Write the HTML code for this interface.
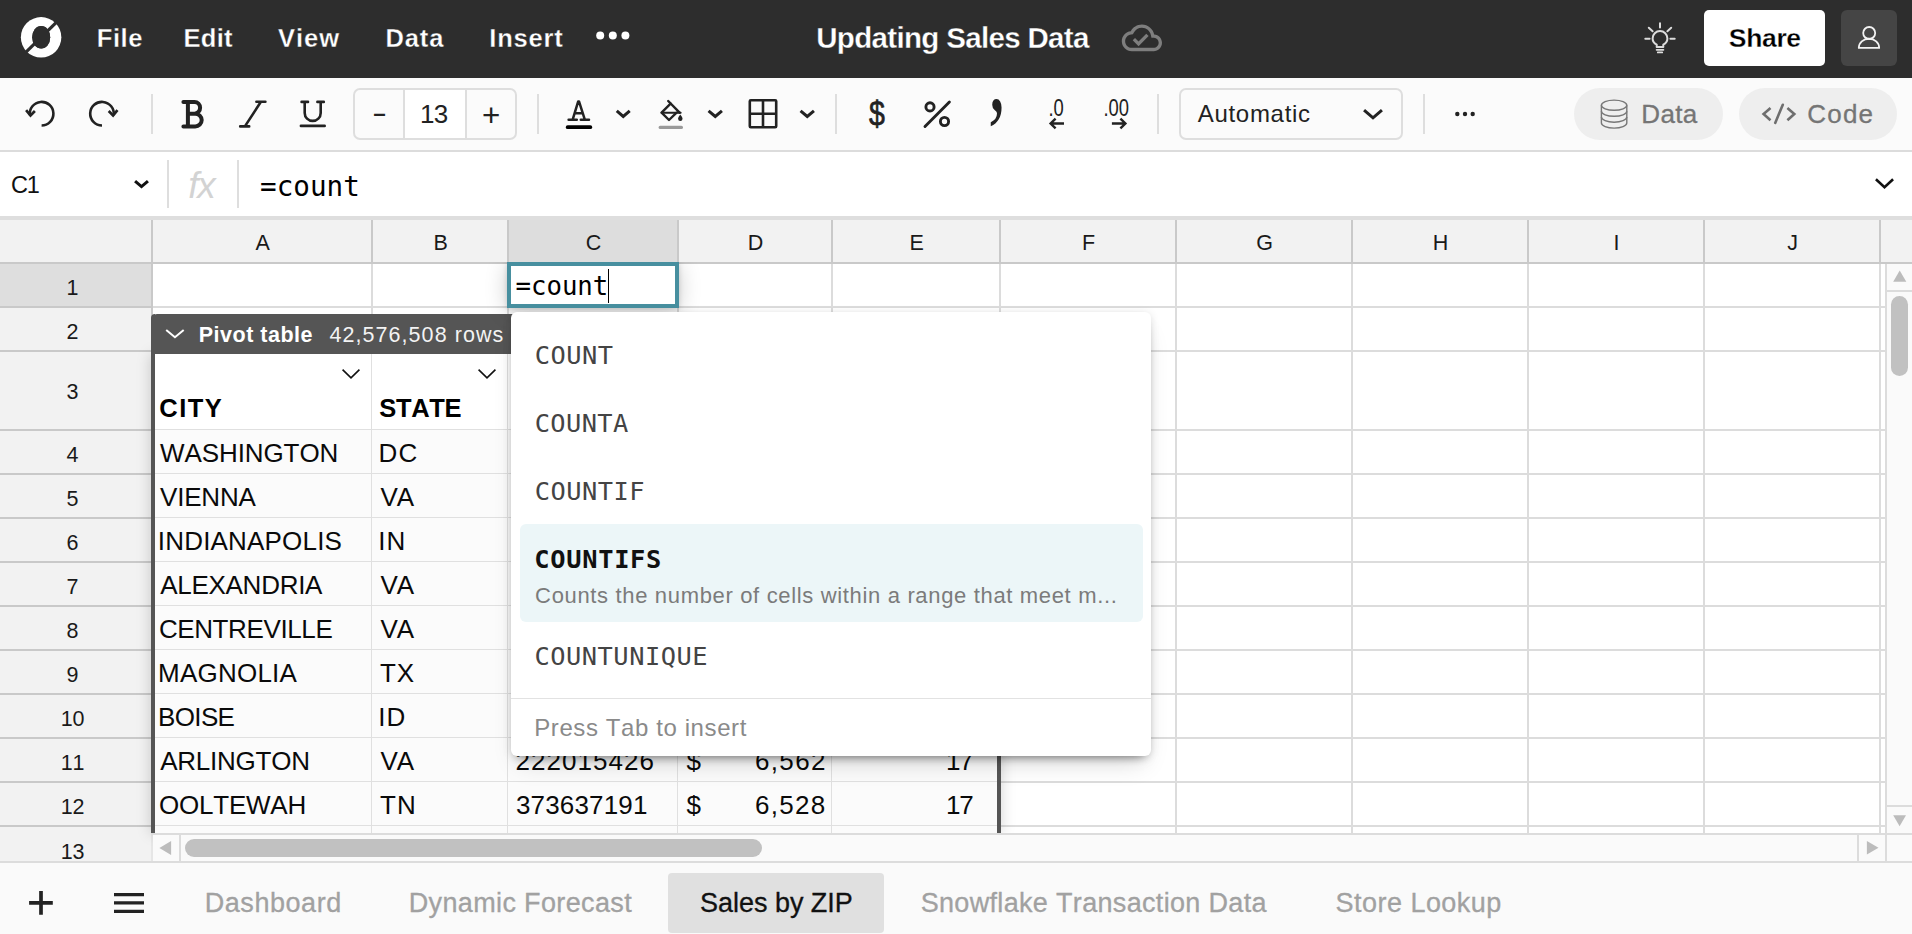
<!DOCTYPE html>
<html lang="en"><head><meta charset="utf-8"><title>Updating Sales Data</title>
<style>
html,body{margin:0;padding:0;}
body{width:1912px;height:934px;overflow:hidden;position:relative;background:#fff;font-family:"Liberation Sans",sans-serif;font-kerning:none;-webkit-font-smoothing:antialiased;}
.t{position:absolute;white-space:nowrap;line-height:1;display:block;}
.sec{position:absolute;left:0;width:1912px;overflow:hidden;}
svg{position:absolute;left:0;top:0;overflow:visible;}
.ln{position:absolute;background:#dcdcdc;}
</style></head><body>

<header class="sec" style="top:0;height:78px;background:#2d2d2d;">
<nav>
<span class="t" style="left:96.79px;top:25.85px;font-size:25.5px;color:#fff;font-weight:700;letter-spacing:0.550px;-webkit-text-stroke:0.3px #2d2d2d;">File</span>
<span class="t" style="left:183.49px;top:25.85px;font-size:25.5px;color:#fff;font-weight:700;letter-spacing:0.319px;-webkit-text-stroke:0.3px #2d2d2d;">Edit</span>
<span class="t" style="left:278.03px;top:25.85px;font-size:25.5px;color:#fff;font-weight:700;letter-spacing:1.005px;-webkit-text-stroke:0.3px #2d2d2d;">View</span>
<span class="t" style="left:385.59px;top:25.85px;font-size:25.5px;color:#fff;font-weight:700;letter-spacing:0.824px;-webkit-text-stroke:0.3px #2d2d2d;">Data</span>
<span class="t" style="left:489.29px;top:25.85px;font-size:25.5px;color:#fff;font-weight:700;letter-spacing:0.815px;-webkit-text-stroke:0.3px #2d2d2d;">Insert</span>
</nav>
<h1 class="t" style="left:816.23px;top:22.95px;font-size:29.5px;color:#fff;font-weight:700;letter-spacing:-0.675px;margin:0;-webkit-text-stroke:0.3px #2d2d2d;">Updating Sales Data</h1>
<button style="position:absolute;left:1704.00px;top:10.00px;width:121.00px;height:56.00px;background:#fff;border-radius:5px;border:0;padding:0;font-family:inherit;"><span class="t" style="left:24.84px;top:15.05px;font-size:26.5px;color:#000;font-weight:700;letter-spacing:-0.346px;-webkit-text-stroke:0.3px #fff;">Share</span></button>
<div style="position:absolute;left:1841.00px;top:10.00px;width:56.00px;height:56.00px;background:#454545;border-radius:6px;"></div>
<svg width="1912" height="78" viewBox="0 0 1912 78">
<circle cx="41.1" cy="37.35" r="20.25" fill="#fff"/><ellipse cx="41.2" cy="37.2" rx="9" ry="11.3" fill="#2d2d2d"/>
<path d="M25.2 52.9 L57.1 21.7" stroke="#2d2d2d" stroke-width="3.2" fill="none"/>
<ellipse cx="41.2" cy="37.2" rx="9" ry="11.3" fill="#2d2d2d"/>
<circle cx="600.2" cy="35.5" r="4" fill="#fff"/>
<circle cx="612.8" cy="35.5" r="4" fill="#fff"/>
<circle cx="625.4" cy="35.5" r="4" fill="#fff"/>
<g transform="translate(1121.8,17.7) scale(1.675)" fill="#7e7e7e"><path d="M19.35 10.04C18.67 6.59 15.64 4 12 4 9.11 4 6.6 5.64 5.35 8.04 2.34 8.36 0 10.91 0 14c0 3.31 2.69 6 6 6h13c2.76 0 5-2.24 5-5 0-2.64-2.05-4.78-4.65-4.96zM19 18H6c-2.21 0-4-1.79-4-4 0-2.05 1.53-3.76 3.56-3.97l1.07-.11.5-.95C8.08 7.14 9.94 6 12 6c2.62 0 4.88 1.86 5.39 4.43l.3 1.5 1.53.11c1.56.1 2.78 1.41 2.78 2.96 0 1.65-1.35 3-3 3zm-9-3.82l-2.09-2.09L6.5 13.5 10 17l6.01-6.01-1.41-1.41z"/></g>
<g stroke="#dcdcdc" stroke-width="2" fill="none" stroke-linecap="round">
<path d="M1660 23.3V27.5M1645.3 38.7H1649.6M1670.4 38.7H1674.7M1648.8 27.7L1652.6 31.2M1671.2 27.7L1667.4 31.2"/>
<path d="M1656.7 47 V44.6 C1654 43.2 1652.6 41 1652.6 38.5 A7.4 7.4 0 0 1 1667.4 38.5 C1667.4 41 1666 43.2 1663.3 44.6 V47 Z" stroke-linejoin="round"/>
<path d="M1656.6 49.8H1663.4M1657.8 52.4H1662.2" stroke-width="1.8"/>
</g>
<g stroke="#f2f2f2" stroke-width="1.8" fill="none"><circle cx="1869.2" cy="33" r="6"/><path d="M1858.8 47.9 A10.2 9.2 0 0 1 1879.2 47.9 Z" stroke-linejoin="round"/></g>
</svg>
</header>
<div class="sec" style="top:78px;height:72px;background:#fbfbfb;border-bottom:2px solid #dcdcdc;">
<div style="position:absolute;left:353.00px;top:10.00px;width:164.00px;height:51.50px;border:2px solid #dedede;border-radius:7px;box-sizing:border-box;"></div>
<div style="position:absolute;left:403.00px;top:12.00px;width:2.00px;height:47.50px;background:#dedede;"></div>
<div style="position:absolute;left:465.00px;top:12.00px;width:2.00px;height:47.50px;background:#dedede;"></div>
<div style="position:absolute;left:405.00px;top:12.00px;width:60.00px;height:47.50px;background:#fff;"></div>
<span class="t" style="left:371.70px;top:21.14px;font-size:28.00px;color:#222;transform:scaleX(1.6091);transform-origin:0 23.50px;">-</span>
<span class="t" style="left:419.92px;top:22.70px;font-size:26px;color:#222;letter-spacing:-0.597px;">13</span>
<span class="t" style="left:482.07px;top:21.28px;font-size:32.09px;color:#222;transform:scaleX(0.9750);transform-origin:0 27.04px;">+</span>
<div style="position:absolute;left:150.80px;top:16.00px;width:2.00px;height:40.00px;background:#dedede;"></div>
<div style="position:absolute;left:537.00px;top:16.00px;width:2.00px;height:40.00px;background:#dedede;"></div>
<div style="position:absolute;left:835.00px;top:16.00px;width:2.00px;height:40.00px;background:#dedede;"></div>
<div style="position:absolute;left:1157.00px;top:16.00px;width:2.00px;height:40.00px;background:#dedede;"></div>
<div style="position:absolute;left:1423.00px;top:16.00px;width:2.00px;height:40.00px;background:#dedede;"></div>
<span class="t" style="left:868.59px;top:18.19px;font-size:35.33px;color:#222;transform:scaleX(0.8075);transform-origin:0 30.16px;-webkit-text-stroke:0.7px #222;">$</span>
<span class="t" style="left:987.84px;top:-56.95px;font-size:106.68px;color:#222;transform:scaleX(0.6798);transform-origin:0 89.34px;font-family:'Liberation Serif', serif;">,</span>
<span class="t" style="left:1048.10px;top:18.70px;font-size:23px;color:#222;transform:scaleX(0.8);transform-origin:2.10px 50%;">.0</span>
<span class="t" style="left:1103.10px;top:18.70px;font-size:23px;color:#222;transform:scaleX(0.8);transform-origin:2.10px 50%;">.00</span>
<div style="position:absolute;left:1178.80px;top:10.00px;width:223.90px;height:51.50px;border:2px solid #dedede;border-radius:7px;box-sizing:border-box;"></div>
<span class="t" style="left:1197.75px;top:23.50px;font-size:24px;color:#222;letter-spacing:0.696px;">Automatic</span>
<div style="position:absolute;left:1573.80px;top:10.00px;width:149.20px;height:51.70px;background:#eeeeee;border-radius:26px;"></div>
<div style="position:absolute;left:1739.00px;top:10.00px;width:158.30px;height:51.70px;background:#eeeeee;border-radius:26px;"></div>
<span class="t" style="left:1641.27px;top:22.70px;font-size:26px;color:#757575;letter-spacing:0.338px;-webkit-text-stroke:0.3px #757575;">Data</span>
<span class="t" style="left:1807.28px;top:22.70px;font-size:26px;color:#757575;letter-spacing:1.206px;-webkit-text-stroke:0.3px #757575;">Code</span>
<svg width="1912" height="72" viewBox="0 78 1912 72">
<g stroke="#222" fill="none" stroke-width="2.6">
<path d="M29.9 115.2 A11.8 11.8 0 1 1 41.6 125.5"/><polyline points="26.1,110.2 30.5,115.4 34.9,111" stroke-width="2.7"/>
<path d="M113.7 115.2 A11.8 11.8 0 1 0 102 125.5"/><polyline points="117.5,110.2 113.1,115.4 108.7,111" stroke-width="2.7"/>
</g>
<g stroke="#222" fill="none" stroke-width="4" stroke-linejoin="round" stroke-linecap="round"><path d="M183.4 101.9 H194.5 A5.6 5.9 0 0 1 194.5 113.7 H187.9 M187.9 101.9 V126.4 M187.9 113.7 H195.2 A6.5 6.35 0 0 1 195.2 126.4 H183.4"/></g>
<g stroke="#222" fill="none" stroke-width="2.6" stroke-linecap="round"><path d="M256.4 101.8 H265.4 M240.2 126.4 H249.2 M244.9 126.4 L260.9 101.8"/></g>
<g stroke="#222" fill="none" stroke-width="2.6" stroke-linecap="round"><path d="M301.6 101.9 H308 M317.4 101.9 H323.8 M304.7 101.9 V112.9 A8 8 0 0 0 320.7 112.9 V101.9"/><path d="M301 125.9 H324.6" stroke-width="2.8"/></g>
<g stroke="#222" fill="none" stroke-width="2.5" stroke-linecap="round" stroke-linejoin="round"><path d="M572.6 119.8 L578.2 101.4 H579 L584.9 119.8 M568.6 119.8 H576.8 M580.8 119.8 H589 M574.8 113.2 H582.8"/></g>
<rect x="565.8" y="125.2" width="26.4" height="3.9" rx="1.9" fill="#000"/>
<polyline points="616.76,110.86 623.25,116.48 629.74,110.86" fill="none" stroke="#222" stroke-width="3"/>
<g stroke="#222" fill="none" stroke-width="2.4" stroke-linecap="round" stroke-linejoin="round">
<path d="M668.2 101 L679.6 112.7"/><path d="M670.6 103.6 L661.6 112.7 L669 120 L676.6 112.7"/><path d="M661.6 112.7 H680.6" stroke-width="2.1"/>
</g>
<path d="M680.3 114.6 C681.6 116.3 682.5 117.7 682.5 118.8 A2.2 2.2 0 0 1 678.1 118.8 C678.1 117.7 679 116.3 680.3 114.6Z" fill="#222"/>
<rect x="658.6" y="125.7" width="24.4" height="3.3" rx="1.6" fill="#9a9a9a"/>
<polyline points="708.56,110.86 715.25,116.48 721.94,110.86" fill="none" stroke="#222" stroke-width="3"/>
<g stroke="#222" fill="none" stroke-width="2.6"><rect x="749.8" y="100.3" width="26.4" height="26.9" rx="1"/><path d="M763 100.3V127.2M749.8 113.75H776.2"/></g>
<polyline points="800.56,110.86 807.25,116.48 813.94,110.86" fill="none" stroke="#222" stroke-width="3"/>
<g stroke="#222" fill="none" stroke-width="2.9" stroke-linecap="round"><path d="M925 126.5 L949.4 102"/><circle cx="930" cy="106.9" r="4.1"/><circle cx="944.5" cy="121.5" r="4.1"/></g>
<g stroke="#222" fill="none" stroke-width="2.4"><path d="M1064 123.5H1051M1055.6 118.6 L1050.6 123.5 L1055.6 128.4"/><path d="M1111.9 123.5H1125M1120.4 118.6 L1125.4 123.5 L1120.4 128.4"/></g>
<polyline points="1364.06,110.06 1373.00,117.88 1381.94,110.06" fill="none" stroke="#222" stroke-width="3"/>
<circle cx="1457.3" cy="114" r="2.2" fill="#222"/>
<circle cx="1465" cy="114" r="2.2" fill="#222"/>
<circle cx="1472.7" cy="114" r="2.2" fill="#222"/>
<g stroke="#777" fill="none" stroke-width="1.4"><ellipse cx="1614.1" cy="105.2" rx="12.7" ry="5.1"/><path d="M1601.4 105.2V123M1626.8 105.2V123"/><path d="M1601.4 111.2 A12.7 5.1 0 0 0 1626.8 111.2"/><path d="M1601.4 117.1 A12.7 5.1 0 0 0 1626.8 117.1"/><path d="M1601.4 123 A12.7 5.1 0 0 0 1626.8 123"/></g>
<g stroke="#6e6e6e" fill="none" stroke-width="2.6"><polyline points="1770.5,108 1763.6,114 1770.5,120.2"/><polyline points="1787.4,108 1794.3,114 1787.4,120.2"/><path d="M1775.2 122.9 L1782.8 104.8" stroke-linecap="round"/></g>
</svg>
</div>
<div class="sec" style="top:152px;height:64px;background:#fff;">
<span class="t" style="left:10.91px;top:21.85px;font-size:23.5px;color:#111;letter-spacing:-1.200px;">C1</span>
<div style="position:absolute;left:167.00px;top:8.00px;width:2.00px;height:47.50px;background:#dedede;"></div>
<div style="position:absolute;left:237.00px;top:8.00px;width:2.00px;height:47.50px;background:#dedede;"></div>
<span class="t" style="left:188.15px;top:14.80px;font-size:37px;color:#d3d3d3;font-style:italic;letter-spacing:-1.200px;">fx</span>
<span class="t" style="left:260.11px;top:20.70px;font-size:27.6px;color:#000;font-family:'DejaVu Sans Mono', 'Liberation Mono', monospace;">=count</span>
<svg width="1912" height="64" viewBox="0 152 1912 64">
<polyline points="135.06,181.06 141.50,186.58 147.94,181.06" fill="none" stroke="#111" stroke-width="3"/>
<polyline points="1875.92,179.32 1884.50,187.16 1893.08,179.32" fill="none" stroke="#111" stroke-width="2.6"/>
</svg>
</div>
<main class="sec" style="top:216px;height:646px;background:#fff;">
<div style="position:absolute;left:0.00px;top:0.00px;width:1912.00px;height:4.00px;background:#dedede;"></div>
<div style="position:absolute;left:0.00px;top:4.00px;width:1912.00px;height:43.00px;background:#f2f2f2;"></div>
<div style="position:absolute;left:0.00px;top:47.00px;width:152.00px;height:599.00px;background:#f2f2f2;"></div>
<div style="position:absolute;left:509.00px;top:4.00px;width:168.00px;height:43.00px;background:#dddddd;"></div>
<div style="position:absolute;left:0.00px;top:48.00px;width:151.00px;height:42.00px;background:#dedede;"></div>
<i class="ln" style="left:151px;top:4px;width:2px;height:613px;"></i>
<i class="ln" style="left:371px;top:4px;width:2px;height:613px;"></i>
<i class="ln" style="left:507px;top:4px;width:2px;height:613px;"></i>
<i class="ln" style="left:677px;top:4px;width:2px;height:613px;"></i>
<i class="ln" style="left:831px;top:4px;width:2px;height:613px;"></i>
<i class="ln" style="left:999px;top:4px;width:2px;height:613px;"></i>
<i class="ln" style="left:1175px;top:4px;width:2px;height:613px;"></i>
<i class="ln" style="left:1351px;top:4px;width:2px;height:613px;"></i>
<i class="ln" style="left:1527px;top:4px;width:2px;height:613px;"></i>
<i class="ln" style="left:1703px;top:4px;width:2px;height:613px;"></i>
<i class="ln" style="left:1879px;top:4px;width:2px;height:613px;"></i>
<i class="ln" style="left:0;top:46px;width:1886px;height:2px;"></i>
<i class="ln" style="left:0;top:90px;width:1886px;height:2px;"></i>
<i class="ln" style="left:0;top:134px;width:1886px;height:2px;"></i>
<i class="ln" style="left:0;top:213px;width:1886px;height:2px;"></i>
<i class="ln" style="left:0;top:257px;width:1886px;height:2px;"></i>
<i class="ln" style="left:0;top:301px;width:1886px;height:2px;"></i>
<i class="ln" style="left:0;top:345px;width:1886px;height:2px;"></i>
<i class="ln" style="left:0;top:389px;width:1886px;height:2px;"></i>
<i class="ln" style="left:0;top:433px;width:1886px;height:2px;"></i>
<i class="ln" style="left:0;top:477px;width:1886px;height:2px;"></i>
<i class="ln" style="left:0;top:521px;width:1886px;height:2px;"></i>
<i class="ln" style="left:0;top:565px;width:1886px;height:2px;"></i>
<i class="ln" style="left:0;top:609px;width:1886px;height:2px;"></i>
<div style="position:absolute;left:371.00px;top:4.00px;width:2.00px;height:42.00px;background:#c9c9c9;"></div>
<div style="position:absolute;left:507.00px;top:4.00px;width:2.00px;height:42.00px;background:#c9c9c9;"></div>
<div style="position:absolute;left:677.00px;top:4.00px;width:2.00px;height:42.00px;background:#c9c9c9;"></div>
<div style="position:absolute;left:831.00px;top:4.00px;width:2.00px;height:42.00px;background:#c9c9c9;"></div>
<div style="position:absolute;left:999.00px;top:4.00px;width:2.00px;height:42.00px;background:#c9c9c9;"></div>
<div style="position:absolute;left:1175.00px;top:4.00px;width:2.00px;height:42.00px;background:#c9c9c9;"></div>
<div style="position:absolute;left:1351.00px;top:4.00px;width:2.00px;height:42.00px;background:#c9c9c9;"></div>
<div style="position:absolute;left:1527.00px;top:4.00px;width:2.00px;height:42.00px;background:#c9c9c9;"></div>
<div style="position:absolute;left:1703.00px;top:4.00px;width:2.00px;height:42.00px;background:#c9c9c9;"></div>
<div style="position:absolute;left:1879.00px;top:4.00px;width:2.00px;height:42.00px;background:#c9c9c9;"></div>
<div style="position:absolute;left:0.00px;top:90.00px;width:151.00px;height:2.00px;background:#c9c9c9;"></div>
<div style="position:absolute;left:0.00px;top:134.00px;width:151.00px;height:2.00px;background:#c9c9c9;"></div>
<div style="position:absolute;left:0.00px;top:213.00px;width:151.00px;height:2.00px;background:#c9c9c9;"></div>
<div style="position:absolute;left:0.00px;top:257.00px;width:151.00px;height:2.00px;background:#c9c9c9;"></div>
<div style="position:absolute;left:0.00px;top:301.00px;width:151.00px;height:2.00px;background:#c9c9c9;"></div>
<div style="position:absolute;left:0.00px;top:345.00px;width:151.00px;height:2.00px;background:#c9c9c9;"></div>
<div style="position:absolute;left:0.00px;top:389.00px;width:151.00px;height:2.00px;background:#c9c9c9;"></div>
<div style="position:absolute;left:0.00px;top:433.00px;width:151.00px;height:2.00px;background:#c9c9c9;"></div>
<div style="position:absolute;left:0.00px;top:477.00px;width:151.00px;height:2.00px;background:#c9c9c9;"></div>
<div style="position:absolute;left:0.00px;top:521.00px;width:151.00px;height:2.00px;background:#c9c9c9;"></div>
<div style="position:absolute;left:0.00px;top:565.00px;width:151.00px;height:2.00px;background:#c9c9c9;"></div>
<div style="position:absolute;left:0.00px;top:609.00px;width:151.00px;height:2.00px;background:#c9c9c9;"></div>
<div style="position:absolute;left:0.00px;top:46.00px;width:1912.00px;height:2.00px;background:#c9c9c9;"></div>
<div style="position:absolute;left:151.00px;top:4.00px;width:2.00px;height:613.00px;background:#c9c9c9;"></div>
<div style="position:absolute;left:151.00px;top:617.00px;width:2.00px;height:29.00px;background:#e6e6e6;"></div>
<span class="t" style="left:255.43px;top:17.45px;font-size:21.5px;color:#1a1a1a;">A</span>
<span class="t" style="left:433.43px;top:17.45px;font-size:21.5px;color:#1a1a1a;">B</span>
<span class="t" style="left:585.84px;top:17.45px;font-size:21.5px;color:#1a1a1a;">C</span>
<span class="t" style="left:747.84px;top:17.45px;font-size:21.5px;color:#1a1a1a;">D</span>
<span class="t" style="left:909.43px;top:17.45px;font-size:21.5px;color:#1a1a1a;">E</span>
<span class="t" style="left:1082.03px;top:17.45px;font-size:21.5px;color:#1a1a1a;">F</span>
<span class="t" style="left:1256.24px;top:17.45px;font-size:21.5px;color:#1a1a1a;">G</span>
<span class="t" style="left:1432.84px;top:17.45px;font-size:21.5px;color:#1a1a1a;">H</span>
<span class="t" style="left:1613.61px;top:17.45px;font-size:21.5px;color:#1a1a1a;">I</span>
<span class="t" style="left:1787.22px;top:17.45px;font-size:21.5px;color:#1a1a1a;">J</span>
<span class="t" style="left:66.62px;top:61.65px;font-size:21.5px;color:#1a1a1a;">1</span>
<span class="t" style="left:66.62px;top:105.65px;font-size:21.5px;color:#1a1a1a;">2</span>
<span class="t" style="left:66.62px;top:166.05px;font-size:21.5px;color:#1a1a1a;">3</span>
<span class="t" style="left:66.62px;top:228.65px;font-size:21.5px;color:#1a1a1a;">4</span>
<span class="t" style="left:66.62px;top:272.65px;font-size:21.5px;color:#1a1a1a;">5</span>
<span class="t" style="left:66.62px;top:316.65px;font-size:21.5px;color:#1a1a1a;">6</span>
<span class="t" style="left:66.62px;top:360.65px;font-size:21.5px;color:#1a1a1a;">7</span>
<span class="t" style="left:66.62px;top:404.65px;font-size:21.5px;color:#1a1a1a;">8</span>
<span class="t" style="left:66.62px;top:448.65px;font-size:21.5px;color:#1a1a1a;">9</span>
<span class="t" style="left:60.64px;top:492.65px;font-size:21.5px;color:#1a1a1a;">10</span>
<span class="t" style="left:60.64px;top:536.65px;font-size:21.5px;color:#1a1a1a;">11</span>
<span class="t" style="left:60.64px;top:580.65px;font-size:21.5px;color:#1a1a1a;">12</span>
<span class="t" style="left:60.64px;top:625.65px;font-size:21.5px;color:#1a1a1a;">13</span>
<div style="position:absolute;left:151.00px;top:138.00px;width:850.00px;height:479.00px;background:#fbfbfb;box-shadow:0 0 14px rgba(0,0,0,.18);"></div>
<div style="position:absolute;left:155.00px;top:138.00px;width:842.00px;height:76.00px;background:#fff;"></div>
<div style="position:absolute;left:370.80px;top:138.00px;width:1.20px;height:479.00px;background:#e0e0e0;"></div>
<div style="position:absolute;left:506.80px;top:138.00px;width:1.20px;height:479.00px;background:#e0e0e0;"></div>
<div style="position:absolute;left:676.80px;top:138.00px;width:1.20px;height:479.00px;background:#e0e0e0;"></div>
<div style="position:absolute;left:830.80px;top:138.00px;width:1.20px;height:479.00px;background:#e0e0e0;"></div>
<div style="position:absolute;left:155.00px;top:213.00px;width:842.00px;height:1.20px;background:#e0e0e0;"></div>
<div style="position:absolute;left:155.00px;top:257.00px;width:842.00px;height:1.20px;background:#e0e0e0;"></div>
<div style="position:absolute;left:155.00px;top:301.00px;width:842.00px;height:1.20px;background:#e0e0e0;"></div>
<div style="position:absolute;left:155.00px;top:345.00px;width:842.00px;height:1.20px;background:#e0e0e0;"></div>
<div style="position:absolute;left:155.00px;top:389.00px;width:842.00px;height:1.20px;background:#e0e0e0;"></div>
<div style="position:absolute;left:155.00px;top:433.00px;width:842.00px;height:1.20px;background:#e0e0e0;"></div>
<div style="position:absolute;left:155.00px;top:477.00px;width:842.00px;height:1.20px;background:#e0e0e0;"></div>
<div style="position:absolute;left:155.00px;top:521.00px;width:842.00px;height:1.20px;background:#e0e0e0;"></div>
<div style="position:absolute;left:155.00px;top:565.00px;width:842.00px;height:1.20px;background:#e0e0e0;"></div>
<div style="position:absolute;left:155.00px;top:609.00px;width:842.00px;height:1.20px;background:#e0e0e0;"></div>
<div style="position:absolute;left:151.00px;top:98.20px;width:4.00px;height:518.80px;background:#555;border-radius:6px 0 0 0;"></div>
<div style="position:absolute;left:997.00px;top:98.20px;width:4.00px;height:518.80px;background:#555;border-radius:0 6px 0 0;"></div>
<div style="position:absolute;left:151.00px;top:98.20px;width:850.00px;height:39.80px;background:#555;border-radius:6px 6px 0 0;"></div>
<span class="t" style="left:198.76px;top:108.85px;font-size:21.5px;color:#fff;font-weight:700;letter-spacing:0.506px;">Pivot table</span>
<span class="t" style="left:329.41px;top:108.85px;font-size:21.5px;color:#f3f3f3;letter-spacing:1.064px;">42,576,508 rows</span>
<span class="t" style="left:159.35px;top:180.25px;font-size:25.5px;color:#000;font-weight:700;letter-spacing:1.457px;">CITY</span>
<span class="t" style="left:379.37px;top:180.25px;font-size:25.5px;color:#000;font-weight:700;letter-spacing:-0.339px;">STATE</span>
<span class="t" style="left:160.09px;top:223.70px;font-size:26px;color:#0a0a0a;letter-spacing:-0.097px;">WASHINGTON</span>
<span class="t" style="left:378.47px;top:223.70px;font-size:26px;color:#0a0a0a;letter-spacing:1.200px;">DC</span>
<span class="t" style="left:160.09px;top:267.70px;font-size:26px;color:#0a0a0a;letter-spacing:-0.207px;">VIENNA</span>
<span class="t" style="left:380.49px;top:267.70px;font-size:26px;color:#0a0a0a;letter-spacing:-1.200px;">VA</span>
<span class="t" style="left:157.80px;top:311.70px;font-size:26px;color:#0a0a0a;letter-spacing:0.186px;">INDIANAPOLIS</span>
<span class="t" style="left:378.20px;top:311.70px;font-size:26px;color:#0a0a0a;letter-spacing:1.200px;">IN</span>
<span class="t" style="left:160.15px;top:355.70px;font-size:26px;color:#0a0a0a;letter-spacing:-0.269px;">ALEXANDRIA</span>
<span class="t" style="left:380.49px;top:355.70px;font-size:26px;color:#0a0a0a;letter-spacing:-1.200px;">VA</span>
<span class="t" style="left:158.88px;top:399.70px;font-size:26px;color:#0a0a0a;letter-spacing:-0.388px;">CENTREVILLE</span>
<span class="t" style="left:380.49px;top:399.70px;font-size:26px;color:#0a0a0a;letter-spacing:-1.200px;">VA</span>
<span class="t" style="left:158.07px;top:443.70px;font-size:26px;color:#0a0a0a;letter-spacing:0.219px;">MAGNOLIA</span>
<span class="t" style="left:380.02px;top:443.70px;font-size:26px;color:#0a0a0a;letter-spacing:0.906px;">TX</span>
<span class="t" style="left:158.07px;top:487.70px;font-size:26px;color:#0a0a0a;letter-spacing:-0.656px;">BOISE</span>
<span class="t" style="left:378.20px;top:487.70px;font-size:26px;color:#0a0a0a;letter-spacing:1.200px;">ID</span>
<span class="t" style="left:160.15px;top:531.70px;font-size:26px;color:#0a0a0a;letter-spacing:-0.239px;">ARLINGTON</span>
<span class="t" style="left:380.49px;top:531.70px;font-size:26px;color:#0a0a0a;letter-spacing:-1.200px;">VA</span>
<span class="t" style="left:158.97px;top:575.70px;font-size:26px;color:#0a0a0a;letter-spacing:-0.220px;">OOLTEWAH</span>
<span class="t" style="left:380.02px;top:575.70px;font-size:26px;color:#0a0a0a;letter-spacing:1.200px;">TN</span>
<span class="t" style="left:515.59px;top:531.70px;font-size:26px;color:#0a0a0a;letter-spacing:1.039px;">222015426</span>
<span class="t" style="left:686.62px;top:531.70px;font-size:26px;color:#0a0a0a;">$</span>
<span class="t" style="left:754.88px;top:531.70px;font-size:26px;color:#0a0a0a;letter-spacing:1.391px;">6,562</span>
<span class="t" style="left:946.02px;top:531.70px;font-size:26px;color:#0a0a0a;letter-spacing:-1.132px;">17</span>
<span class="t" style="left:515.91px;top:575.70px;font-size:26px;color:#0a0a0a;letter-spacing:0.165px;">373637191</span>
<span class="t" style="left:686.62px;top:575.70px;font-size:26px;color:#0a0a0a;">$</span>
<span class="t" style="left:754.88px;top:575.70px;font-size:26px;color:#0a0a0a;letter-spacing:1.347px;">6,528</span>
<span class="t" style="left:946.02px;top:575.70px;font-size:26px;color:#0a0a0a;letter-spacing:-1.132px;">17</span>
<svg width="1912" height="646" viewBox="0 216 1912 646">
<polyline points="166.21,330.01 174.95,337.29 183.69,330.01" fill="none" stroke="#fff" stroke-width="2"/>
<polyline points="342.57,369.57 351.00,377.87 359.43,369.57" fill="none" stroke="#111" stroke-width="1.6"/>
<polyline points="478.57,369.57 487.00,377.87 495.43,369.57" fill="none" stroke="#111" stroke-width="1.6"/>
</svg>
<div style="position:absolute;left:0.00px;top:46.00px;width:1912.00px;height:158.00px;overflow:hidden;"><div style="position:absolute;left:507.00px;top:0.00px;width:172.00px;height:46.00px;box-sizing:border-box;border:4px solid #478f9f;background:#fff;box-shadow:0 3px 22px rgba(0,0,0,.2),0 1px 5px rgba(0,0,0,.15);"></div><span class="t" style="left:515.50px;top:12.45px;font-size:25.7px;color:#000;font-family:'DejaVu Sans Mono', 'Liberation Mono', monospace;">=count</span><div style="position:absolute;left:607.80px;top:7.00px;width:1.40px;height:33.70px;background:#000;"></div></div>
<div style="position:absolute;left:1885.00px;top:48.00px;width:27.00px;height:569.00px;background:#fafafa;"></div>
<div style="position:absolute;left:1885.00px;top:48.00px;width:2.00px;height:598.00px;background:#dcdcdc;"></div>
<div style="position:absolute;left:1887.00px;top:73.50px;width:25.00px;height:2.00px;background:#dcdcdc;"></div>
<div style="position:absolute;left:1887.00px;top:589.00px;width:25.00px;height:2.00px;background:#dcdcdc;"></div>
<div style="position:absolute;left:1891.00px;top:80.20px;width:16.60px;height:79.80px;background:#c1c1c1;border-radius:9px;"></div>
<div style="position:absolute;left:153.00px;top:617.00px;width:1732.00px;height:29.00px;background:#fafafa;"></div>
<div style="position:absolute;left:1887.00px;top:617.00px;width:25.00px;height:29.00px;background:#fafafa;"></div>
<div style="position:absolute;left:153.00px;top:617.00px;width:1759.00px;height:2.00px;background:#dcdcdc;"></div>
<div style="position:absolute;left:179.00px;top:619.00px;width:2.00px;height:26.00px;background:#dcdcdc;"></div>
<div style="position:absolute;left:1857.00px;top:619.00px;width:2.00px;height:26.00px;background:#dcdcdc;"></div>
<div style="position:absolute;left:185.20px;top:623.00px;width:577.20px;height:18.00px;background:#c1c1c1;border-radius:9px;"></div>
<svg width="1912" height="646" viewBox="0 216 1912 646" fill="#bcbcbc">
<path d="M1893.2 281.8 L1899.7 270.5 L1906.3 281.8Z"/><path d="M1893.2 815.3 L1899.6 826.2 L1906 815.3Z"/>
<path d="M171.1 841.1 L159.4 848.1 L171.1 855.1Z"/><path d="M1866.9 841 L1878.5 847.8 L1866.9 854.6Z"/>
</svg>
<div style="position:absolute;left:0.00px;top:645.00px;width:1912.00px;height:1.00px;background:#dcdcdc;"></div>
<div class="popup" style="position:absolute;left:511.00px;top:96.00px;width:640.00px;height:444.00px;background:#fff;border-radius:6px;box-shadow:0 7px 10px -7px rgba(0,0,0,.5),0 14px 24px -8px rgba(0,0,0,.16),0 1px 8px rgba(0,0,0,.12);"><div style="position:absolute;left:8.50px;top:212.40px;width:623.20px;height:97.20px;background:#ecf6f8;border-radius:6px;"></div><span class="t" style="left:23.68px;top:30.70px;font-size:25.4px;color:#444;font-family:'DejaVu Sans Mono', 'Liberation Mono', monospace;letter-spacing:0.487px;">COUNT</span><span class="t" style="left:23.68px;top:99.00px;font-size:25.4px;color:#444;font-family:'DejaVu Sans Mono', 'Liberation Mono', monospace;letter-spacing:0.366px;">COUNTA</span><span class="t" style="left:23.68px;top:167.30px;font-size:25.4px;color:#444;font-family:'DejaVu Sans Mono', 'Liberation Mono', monospace;letter-spacing:0.480px;">COUNTIF</span><span class="t" style="left:23.31px;top:234.50px;font-size:25.4px;color:#111;font-family:'DejaVu Sans Mono', 'Liberation Mono', monospace;font-weight:700;letter-spacing:0.682px;">COUNTIFS</span><span class="t" style="left:24.08px;top:272.50px;font-size:22px;color:#7b7b7b;letter-spacing:0.661px;">Counts the number of cells within a range that meet m...</span><span class="t" style="left:23.48px;top:331.90px;font-size:25.4px;color:#444;font-family:'DejaVu Sans Mono', 'Liberation Mono', monospace;letter-spacing:0.494px;">COUNTUNIQUE</span><div style="position:absolute;left:0.00px;top:386.00px;width:640.00px;height:1.30px;background:#e2e2e2;"></div><span class="t" style="left:23.23px;top:403.50px;font-size:24px;color:#8a8a8a;letter-spacing:0.596px;">Press Tab to insert</span></div>
</main>
<footer class="sec" style="top:862px;height:72px;background:#fafafa;">
<div style="position:absolute;left:0.00px;top:0.00px;width:1912.00px;height:1.00px;background:#dcdcdc;"></div>
<div style="position:absolute;left:668.20px;top:10.70px;width:215.70px;height:59.90px;background:#e0e0e0;border-radius:4px;"></div>
<span class="t" style="left:204.69px;top:28.00px;font-size:27px;color:#a1a1a1;letter-spacing:0.559px;-webkit-text-stroke:0.3px #a1a1a1;">Dashboard</span>
<span class="t" style="left:408.69px;top:28.00px;font-size:27px;color:#a1a1a1;letter-spacing:0.364px;-webkit-text-stroke:0.3px #a1a1a1;">Dynamic Forecast</span>
<span class="t" style="left:699.97px;top:28.00px;font-size:27px;color:#111;letter-spacing:-0.019px;-webkit-text-stroke:0.3px #111;">Sales by ZIP</span>
<span class="t" style="left:920.67px;top:28.00px;font-size:27px;color:#a1a1a1;letter-spacing:0.326px;-webkit-text-stroke:0.3px #a1a1a1;">Snowflake Transaction Data</span>
<span class="t" style="left:1335.57px;top:28.00px;font-size:27px;color:#a1a1a1;letter-spacing:0.468px;-webkit-text-stroke:0.3px #a1a1a1;">Store Lookup</span>
<svg width="1912" height="72" viewBox="0 862 1912 72">
<path d="M29.1 902.9H52.8M41 890.9V914.8" stroke="#222" stroke-width="3.7" fill="none"/>
<path d="M114 894.6H144M114 902.9H144M114 911.4H144" stroke="#222" stroke-width="3.3" fill="none"/>
</svg>
</footer>
</body></html>
